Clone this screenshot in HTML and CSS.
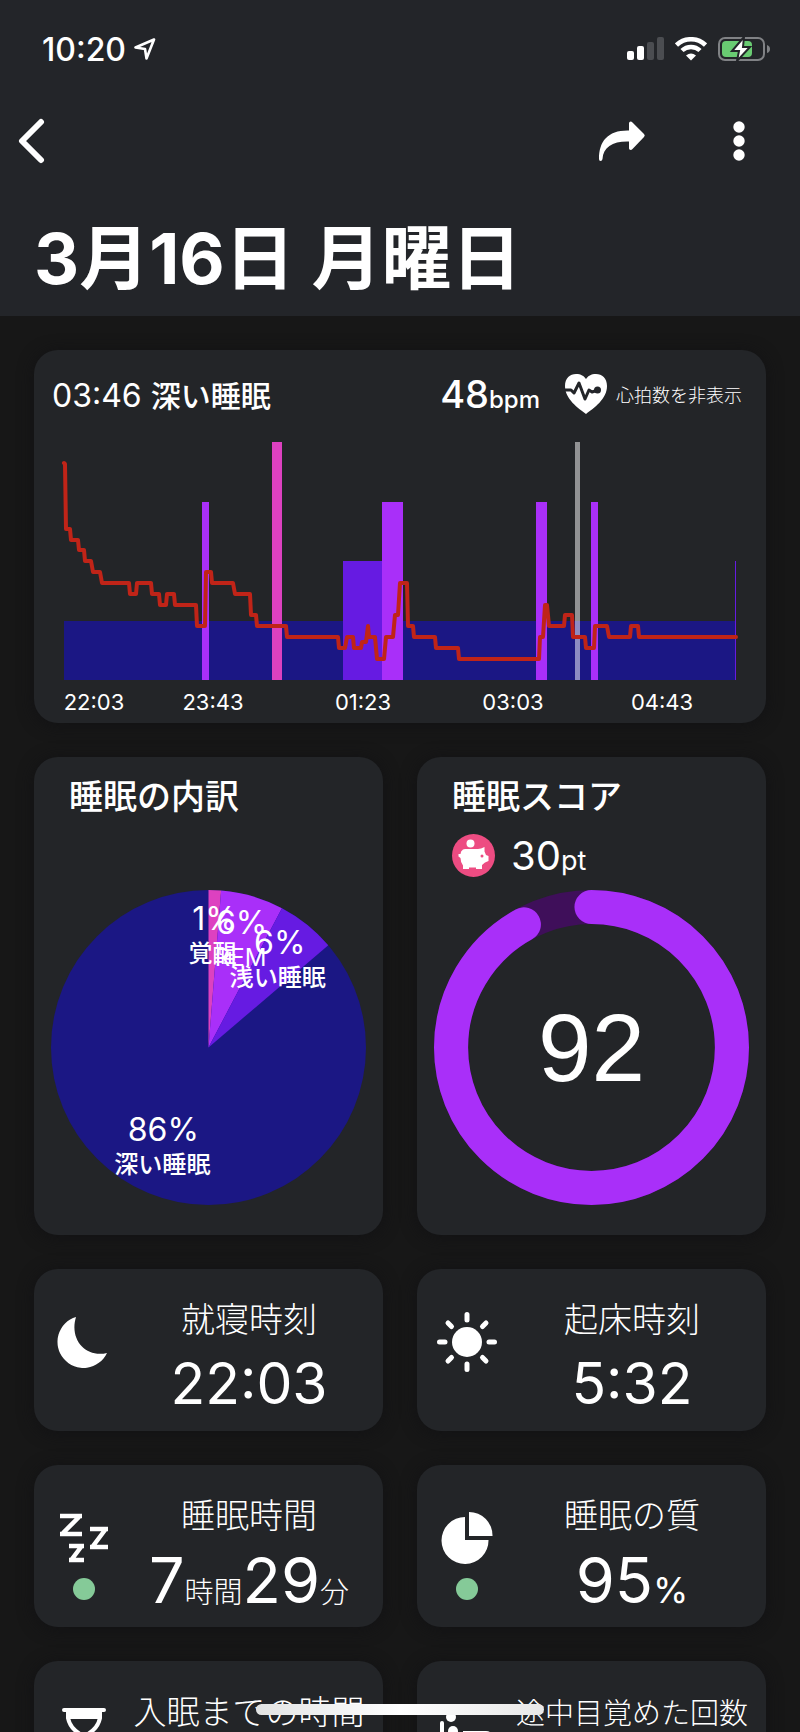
FILE: index.html
```html
<!DOCTYPE html>
<html lang="ja">
<head>
    <meta charset="UTF-8">
    <meta name="viewport" content="width=device-width, initial-scale=1.0">
    <title>3月16日 月曜日</title>
    <link rel="stylesheet" href="styles.css">
</head>
<body>
    <header class="header">
        <div class="status-bar">
            <div class="status-time">
                <span>10:20</span>
                <svg width="22" height="22" viewBox="0 0 22 22"><path d="M20 1.500 L1.500 9.500 L11 11 L12.500 20.500 Z" fill="none" stroke="#fff" stroke-width="2.600" stroke-linejoin="round"/></svg>
            </div>
            <div class="status-icons">
                <svg width="37" height="24" viewBox="0 0 37 24">
                    <rect x="0" y="14" width="7" height="9" rx="2" fill="#fff"/>
                    <rect x="10" y="9" width="7" height="14" rx="2" fill="#fff"/>
                    <rect x="20" y="5" width="7" height="18" rx="2" fill="#4b4d51"/>
                    <rect x="30" y="0" width="7" height="23" rx="2" fill="#4b4d51"/>
                </svg>
                <svg width="32" height="24" viewBox="0 0 32 24" fill="none" stroke="#fff">
                    <path d="M1.500 8 A21 21 0 0 1 30.500 8" stroke-width="4.500"/>
                    <path d="M7 13.500 A13 13 0 0 1 25 13.500" stroke-width="4.500"/>
                    <path d="M16 23.500 L11 18.500 Q16 14.500 21 18.500 Z" fill="#fff" stroke="none"/>
                </svg>
                <svg width="52" height="26" viewBox="0 0 52 26">
                    <rect x="1" y="2" width="45" height="22" rx="6" fill="none" stroke="#808285" stroke-width="2"/>
                    <path d="M49 9 Q52 10 52 13 Q52 16 49 17 Z" fill="#808285"/>
                    <rect x="4" y="5" width="30" height="16" rx="4" fill="#69cb72"/>
                    <path d="M26 1 L14 15 H21 L19 25 L32 11 H25 Z" fill="#fff" stroke="#232529" stroke-width="2"/>
                </svg>
            </div>
        </div>
        <nav class="toolbar">
            <button class="icon-button" aria-label="戻る">
                <svg width="28" height="46" viewBox="0 0 28 46"><path d="M23 4 L4 23 L23 42" fill="none" stroke="#fff" stroke-width="6" stroke-linecap="round" stroke-linejoin="round"/></svg>
            </button>
            <div class="toolbar-actions">
                <button class="icon-button" aria-label="共有">
                    <svg width="48" height="40" viewBox="0 0 48 40"><path d="M31.500 1 Q33 0 34.500 1.500 L46 13 Q47.500 14.500 46 16 L34.500 28 Q33 29.500 31.500 28.500 Q31 28 31 27 V20.500 C15 20 5 26 4.500 38 Q4.200 40 2.500 40 Q1 40 1 38 C1 20 10 9 31 9.500 V2.500 Q31 1.500 31.500 1 Z" fill="#fff"/></svg>
                </button>
                <button class="icon-button" aria-label="メニュー">
                    <svg width="12" height="40" viewBox="0 0 12 40" fill="#fff"><circle cx="6" cy="6" r="5.700"/><circle cx="6" cy="20" r="5.700"/><circle cx="6" cy="34" r="5.700"/></svg>
                </button>
            </div>
        </nav>
        <h1 class="title">3月16日 月曜日</h1>
    </header>

    <main class="content">
        <section class="card chart-card">
            <div class="chart-header">
                <span class="chart-time">03:46 <span class="phase">深い睡眠</span></span>
                <span class="chart-bpm">48<small>bpm</small></span>
                <button class="heart-button">
                    <svg width="44" height="42" viewBox="0 0 44 42">
                        <path d="M22 41 C14 35 1 26 1 13 C1 5 6 1 12 1 C17 1 20 3 22 6 C24 3 27 1 32 1 C38 1 43 5 43 13 C43 26 30 35 22 41 Z" fill="#fff"/>
                        <path d="M0 17 H7 L10 20 L15 10 L21 26 L25 17 L28 19 L34 17" fill="none" stroke="#232529" stroke-width="3" stroke-linejoin="round"/>
                        <circle cx="33.500" cy="17" r="3.500" fill="#232529"/>
                    </svg>
                    心拍数を非表示
                </button>
            </div>
            <svg class="chart" viewBox="0 0 732 293">
                <rect class="deep" x="30" y="191" width="672" height="59"/>
                <rect class="rem" x="168" y="72" width="7" height="178"/>
                <rect class="awake" x="238" y="12" width="10" height="238"/>
                <rect class="light" x="309" y="131" width="39" height="119"/>
                <rect class="rem" x="348" y="72" width="21" height="178"/>
                <rect class="rem" x="502" y="72" width="11" height="178"/>
                <rect class="rem" x="557" y="72" width="7" height="178"/>
                <rect class="light" x="701" y="131" width="1" height="119"/>
                <rect class="cursor" x="541" y="12" width="5" height="238"/>
                <polyline class="heart-rate" points="30,33 31,34 32,99 36,99 37,110 44,110 45,120 50,120 51,131 57,131 59,142 66,142 68,153 95,153 96,164 102,164 103,153 117,153 118,164 125,164 126,175 132,175 133,164 140,164 141,175 162,175 163,196 171,196 172,142 177,142 178,153 199,153 201,164 216,164 217,185 222,185 223,196 252,196 253,207 304,207 305,218 311,218 313,207 319,207 320,218 327,218 328,212 332,212 334,196 335,207 341,207 343,229 350,229 352,207 359,207 361,185 364,185 366,153 373,153 374,196 379,196 380,207 401,207 402,218 424,218 425,229 505,229 506,207 509,207 511,175 513,175 515,196 530,196 531,185 538,185 539,207 551,207 552,218 560,218 561,196 573,196 575,207 596,207 597,196 604,196 605,207 702,207"/>
                <g class="axis">
                    <text x="60" y="280">22:03</text>
                    <text x="179" y="280">23:43</text>
                    <text x="329" y="280">01:23</text>
                    <text x="479" y="280">03:03</text>
                    <text x="628" y="280">04:43</text>
                </g>
            </svg>
        </section>

        <section class="card summary-card">
            <h2 class="card-title">睡眠の内訳</h2>
            <div class="points"></div>
            <svg class="round-chart" viewBox="0 0 316 316">
                <circle class="deep" cx="158" cy="158" r="157"/>
                <path class="awake" d="M158 158 V1 A157 157 0 0 1 170.600 1.500 Z"/>
                <path class="rem" d="M158 158 L170.600 1.500 A157 157 0 0 1 231.200 19.100 Z"/>
                <path class="light" d="M158 158 L231.200 19.100 A157 157 0 0 1 277.400 56 Z"/>
                <g class="pie-percent">
                    <text x="164" y="41">1%</text>
                    <text x="191" y="45">6%</text>
                    <text x="229" y="65">6%</text>
                    <text x="113" y="251">86%</text>
                </g>
                <g class="pie-label">
                    <text x="162" y="73">覚醒</text>
                    <text class="latin" x="190" y="77">REM</text>
                    <text x="227" y="97">浅い睡眠</text>
                    <text x="112" y="283">深い睡眠</text>
                </g>
            </svg>
        </section>

        <section class="card summary-card">
            <h2 class="card-title">睡眠スコア</h2>
            <div class="points">
                <svg width="43" height="43" viewBox="0 0 43 43">
                    <circle cx="21.500" cy="21.500" r="21.500" fill="#ed4c82"/>
                    <circle cx="18.500" cy="9.500" r="4" fill="#fff"/>
                    <path d="M11 15.500 Q12 15 13 15 H26 L29 14.500 L32.500 13 V17.500 L34 21 L36.500 22 V27 L33 28.500 L30 31 V35 H24 V33.500 H17 V35 H11 V31.500 Q8.500 28 8.500 24 L6.500 22.500 V20 H8.500 Q8.500 17 11 15.500 Z" fill="#fff"/>
                    <circle cx="30" cy="22" r="1.500" fill="#ed4c82"/>
                </svg>
                <span class="points-value">30<small>pt</small></span>
            </div>
            <svg class="round-chart" viewBox="0 0 316 316">
                <circle class="ring-track" cx="158" cy="158" r="140"/>
                <circle class="ring-value" cx="158" cy="158" r="140" pathLength="100" stroke-dasharray="92 100" transform="rotate(-90 158 158)"/>
                <text class="score" x="158" y="191">92</text>
            </svg>
        </section>

        <section class="card stat">
            <div class="stat-icon">
                <svg width="60" height="60" viewBox="0 0 60 60"><path d="M22 5 A26 26 0 1 0 53 41 C32 46 15 28 22 5 Z" fill="#fff"/></svg>
            </div>
            <div class="stat-body">
                <h3 class="stat-label">就寝時刻</h3>
                <p class="stat-value">22:03</p>
            </div>
        </section>

        <section class="card stat">
            <div class="stat-icon">
                <svg width="60" height="60" viewBox="0 0 60 60" stroke="#fff" stroke-width="5" stroke-linecap="round">
                    <circle cx="30" cy="30" r="15" fill="#fff" stroke="none"/>
                    <path d="M30 2.500 V8 M30 52 V57.500 M2.500 30 H8 M52 30 H57.500 M11 11 L14.500 14.500 M45.500 45.500 L49 49 M11 49 L14.500 45.500 M45.500 14.500 L49 11"/>
                </svg>
            </div>
            <div class="stat-body">
                <h3 class="stat-label">起床時刻</h3>
                <p class="stat-value">5:32</p>
            </div>
        </section>

        <section class="card stat">
            <div class="stat-icon">
                <svg width="60" height="60" viewBox="-6 -6 60 60" fill="none" stroke="#fff" stroke-width="4.500">
                    <path d="M0 2 H22 M19 3 L3 19 M0 20 H22"/>
                    <path d="M30 15 H48 M45 16 L33 32 M30 33 H48"/>
                    <path d="M9 32 H24 M21 33 L12 45 M9 46 H24"/>
                </svg>
                <span class="dot"></span>
            </div>
            <div class="stat-body">
                <h3 class="stat-label">睡眠時間</h3>
                <p class="stat-value large">7<small>時間</small>29<small>分</small></p>
            </div>
        </section>

        <section class="card stat">
            <div class="stat-icon">
                <svg width="60" height="60" viewBox="-4 -4 60 60" fill="#fff">
                    <path d="M24 5 V28 H47.500 A23.500 23.500 0 1 1 24 5 Z"/>
                    <path d="M28 0 A23.500 23.500 0 0 1 51.500 24 H28 Z"/>
                </svg>
                <span class="dot"></span>
            </div>
            <div class="stat-body">
                <h3 class="stat-label">睡眠の質</h3>
                <p class="stat-value large">95<small class="percent">%</small></p>
            </div>
        </section>

        <section class="card stat">
            <div class="stat-icon">
                <svg width="60" height="60" viewBox="-8 -4 60 60">
                    <path d="M2 2 H42 M2 50 H42" stroke="#fff" stroke-width="4" stroke-linecap="round"/>
                    <path d="M6 2 V10 Q8 20 18 26 Q8 32 6 42 V50 M38 2 V10 Q36 20 26 26 Q36 32 38 42 V50" fill="none" stroke="#fff" stroke-width="4"/>
                    <path d="M6 2 H38 V11 H6 Z" fill="#fff"/>
                </svg>
            </div>
            <div class="stat-body">
                <h3 class="stat-label medium">入眠までの時間</h3>
            </div>
        </section>

        <section class="card stat">
            <div class="stat-icon">
                <svg width="60" height="60" viewBox="0 0 60 60" fill="#fff">
                    <rect x="3" y="17" width="4" height="40" rx="2"/>
                    <circle cx="14" cy="13" r="5"/>
                    <circle cx="16" cy="27" r="5"/>
                    <path d="M26 27 H49 Q55 27 55 33 V40 H26 Z"/>
                    <rect x="3" y="43" width="52" height="5"/>
                </svg>
            </div>
            <div class="stat-body">
                <h3 class="stat-label small">途中目覚めた回数</h3>
            </div>
        </section>
    </main>
    <div class="home-indicator"></div>
</body>
</html>
```

FILE: styles.css
```css
* {
    box-sizing: border-box;
}
body {
    margin: 0;
    height: 100vh;
    overflow: hidden;
    background-color: #171717;
    color: #fff;
    font-family: Inter, "Noto Sans CJK JP", sans-serif;
}
h1, h2, h3, p {
    margin: 0;
}
svg {
    display: block;
    flex: none;
}
button {
    padding: 0;
    border: none;
    background: none;
    color: inherit;
    font-family: inherit;
}

/* header */
.header {
    background-color: #232529;
}
.status-bar {
    display: flex;
    justify-content: space-between;
    align-items: center;
    height: 98px;
    padding: 0 30px 0 42px;
}
.status-time {
    display: flex;
    align-items: center;
    gap: 8px;
    font-size: 32px;
    font-weight: 500;
}
.status-icons {
    display: flex;
    align-items: center;
    gap: 11px;
}
.toolbar {
    display: flex;
    justify-content: space-between;
    align-items: center;
    height: 86px;
    padding: 0 55px 0 18px;
}
.toolbar-actions {
    display: flex;
    gap: 87px;
}
.title {
    padding: 18px 0 0 34px;
    font-size: 70px;
    line-height: 114px;
    font-weight: 700;
    white-space: nowrap;
}

/* cards */
.content {
    display: grid;
    grid-template-columns: 1fr 1fr;
    gap: 34px;
    padding: 34px;
}
.card {
    border-radius: 24px;
    background-color: #232528;
    box-shadow: 0 2px 16px #121214;
}

/* chart */
.chart-card {
    grid-column: 1 / -1;
}
.chart-header {
    display: flex;
    align-items: center;
    height: 80px;
    padding: 8px 24px 0 18px;
    white-space: nowrap;
}
.chart-time {
    flex: 1;
    font-size: 32px;
}
.chart-time .phase {
    font-size: 30px;
    font-weight: 500;
}
.chart-bpm {
    font-size: 38px;
    font-weight: 500;
}
.chart-bpm small {
    font-size: 24px;
}
.heart-button {
    display: flex;
    align-items: center;
    gap: 8px;
    margin-left: 24px;
    font-size: 18px;
    font-weight: 300;
}
.chart {
    width: 100%;
}
.deep {
    fill: #1b1784;
}
.light {
    fill: #661be2;
}
.rem {
    fill: #a92ff9;
}
.awake {
    fill: #dd41c0;
}
.cursor {
    fill: #fff;
    opacity: 0.5;
}
.heart-rate {
    fill: none;
    stroke: #c02418;
    stroke-width: 4;
    stroke-linecap: round;
    stroke-linejoin: round;
}
.axis {
    fill: #fff;
    font-size: 22px;
    text-anchor: middle;
}

/* breakdown and score */
.summary-card {
    padding: 16px 16px 29px;
}
.card-title {
    padding-left: 19px;
    font-size: 34px;
    line-height: 48px;
    font-weight: 500;
}
.points {
    display: flex;
    align-items: center;
    gap: 16px;
    height: 68px;
    padding-left: 19px;
}
.points-value {
    font-size: 40px;
}
.points-value small {
    font-size: 27px;
}
.round-chart {
    width: 100%;
}
.pie-percent {
    fill: #fff;
    font-size: 32px;
    text-anchor: middle;
}
.pie-label {
    fill: #fff;
    font-size: 24px;
    font-weight: 500;
    text-anchor: middle;
}
.pie-label .latin {
    font-weight: 400;
}
.ring-track {
    fill: none;
    stroke: #3f0f5a;
    stroke-width: 34;
}
.ring-value {
    fill: none;
    stroke: #a92ff9;
    stroke-width: 34;
    stroke-linecap: round;
}
.score {
    fill: #fff;
    font-family: "Liberation Sans", Arial, sans-serif;
    font-size: 96px;
    text-anchor: middle;
}

/* stats */
.stat {
    display: flex;
    height: 162px;
    white-space: nowrap;
}
.stat-icon {
    display: flex;
    flex-direction: column;
    align-items: center;
    gap: 10px;
    width: 62px;
    margin-left: 19px;
    padding-top: 43px;
}
.stat-body {
    flex: 1;
    padding-top: 27px;
    text-align: center;
}
.stat-label {
    font-size: 34px;
    line-height: 48px;
    font-weight: 300;
}
.stat-label.medium {
    font-size: 33px;
}
.stat-label.small {
    font-size: 29px;
    line-height: 52px;
}
.stat-value {
    font-size: 57px;
    line-height: 80px;
}
.stat-value.large {
    font-size: 63px;
}
.stat-value small {
    font-size: 29px;
    font-weight: 300;
}
.stat-value .percent {
    font-size: 36px;
    font-weight: 400;
}
.dot {
    width: 22px;
    height: 22px;
    border-radius: 50%;
    background-color: #85ca98;
}

.home-indicator {
    position: fixed;
    bottom: 17px;
    left: 50%;
    width: 36%;
    height: 11px;
    border-radius: 6px;
    background-image: linear-gradient(90deg, #e2e3e3, #fff 50%, #e8e8e8);
    transform: translateX(-50%);
}
```
